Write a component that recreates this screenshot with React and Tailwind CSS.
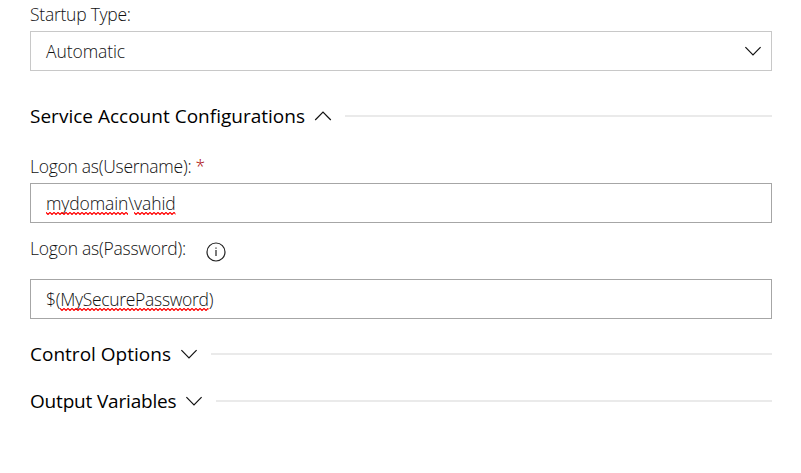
import React from "react";

function Chevron({ up = false, className = "" }) {
  return (
    <svg className={`h-[10px] w-[18px] shrink-0 ${className}`} viewBox="0 0 18 10" fill="none" stroke="#111" strokeWidth="1.2">
      <path d={up ? "M1.2 9L9 1.2L16.8 9" : "M1.4 1.2L9 8.8L16.6 1.2"} />
    </svg>
  );
}

function Misspelled({ children, id }) {
  return (
    <span className="relative inline-block">
      {children}
      <svg className="absolute bottom-[1px] left-0 h-[3px] w-full" aria-hidden="true">
        <defs>
          <pattern id={id} width="4" height="3" patternUnits="userSpaceOnUse">
            <path d="M-1 -0.5L0 0.5L2 2.5L4 0.5L5 -0.5" fill="none" stroke="#f00" strokeWidth="1.2" />
          </pattern>
        </defs>
        <rect width="100%" height="3" fill={`url(#${id})`} />
      </svg>
    </span>
  );
}

function Section({ title, up, spacing }) {
  return (
    <div className="flex h-[30px] items-center">
      <h2 className={`shrink-0 whitespace-nowrap text-[19px] leading-[30px] font-normal text-black ${spacing}`}>{title}</h2>
      <Chevron up={up} className="ml-[9px]" />
      <div className="ml-[13px] h-[2px] flex-1 bg-[#eaeaea]" />
    </div>
  );
}

export default function App() {
  return (
    <main className="h-[473px] w-[801px] overflow-hidden bg-white pl-[30px] pr-[29px] font-['Open_Sans','Noto_Sans',sans-serif] text-[17.5px] font-light text-[#111]">
      <div className="flex h-[31px] items-start pt-[2px]">
        <label className="leading-6 tracking-[-0.25px]">Startup Type:</label>
      </div>
      <div className="flex h-10 items-center justify-between border border-[#c8c8c8] pl-[15px] pr-[9px]">
        <span className="tracking-[-0.08px]">Automatic</span>
        <Chevron />
      </div>
      <div className="mt-[30px]"><Section title="Service Account Configurations" up spacing="tracking-[0.01px]" /></div>
      <div className="mt-[23px] flex h-[29px] items-start">
        <label className="leading-6 tracking-[-0.27px]">Logon as(Username): <span className="text-[#a80000]">*</span></label>
      </div>
      <div className="flex h-10 items-center border border-[#a6a6a6] pl-[15px]">
        <span className="tracking-[-0.12px]"><Misspelled id="wave-domain">mydomain</Misspelled>\<Misspelled id="wave-user">vahid</Misspelled></span>
      </div>
      <div className="flex h-14 items-start pt-[13px]">
        <label className="leading-6 tracking-[-0.24px]">Logon as(Password):</label>
        <svg className="mt-[6px] ml-[20px] h-5 w-5" viewBox="0 0 20 20" fill="none" stroke="#222" strokeWidth="1.2">
          <circle cx="10" cy="10" r="9" />
          <path d="M10 8V14M10 5.4V6.8" />
        </svg>
      </div>
      <div className="flex h-10 items-center border border-[#a6a6a6] pl-[15px]">
        <span className="tracking-[-0.3px]">$(<Misspelled id="wave-password">MySecurePassword</Misspelled>)</span>
      </div>
      <div className="mt-5"><Section title="Control Options" spacing="tracking-[0.01px]" /></div>
      <div className="mt-[17px]"><Section title="Output Variables" spacing="tracking-[-0.18px]" /></div>
    </main>
  );
}
